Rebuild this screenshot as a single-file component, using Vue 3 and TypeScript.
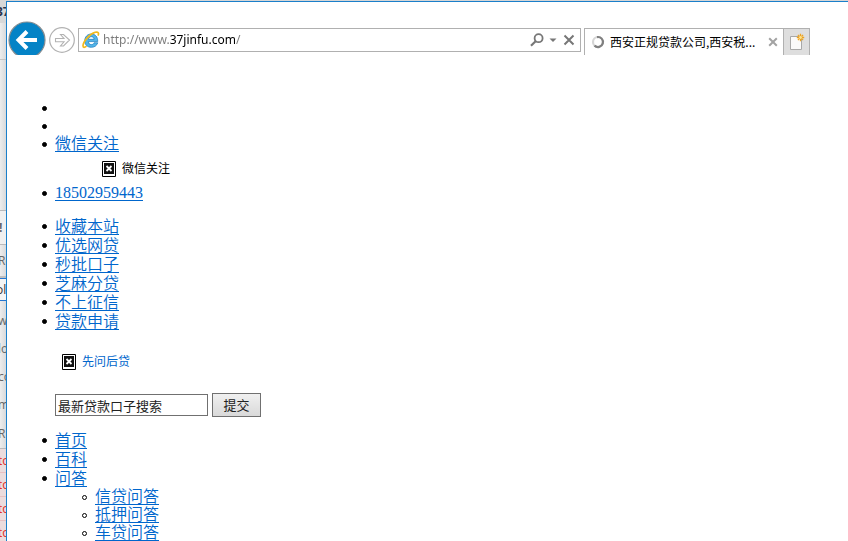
<script setup lang="ts">
import { ref } from 'vue'

interface StripRow {
  kind: string
  text?: string
}

const stripRows: StripRow[] = [
  { kind: 'title', text: '37' },
  { kind: 'toolbar' },
  { kind: 'blank' },
  { kind: 'notice', text: '!' },
  { kind: 'heading', text: 'Re' },
  { kind: 'field', text: 'ol' },
  { kind: 'entry', text: 'w' },
  { kind: 'entry', text: 'lo' },
  { kind: 'entry', text: 'co' },
  { kind: 'entry', text: 'm' },
  { kind: 'entry last', text: 'R' },
  { kind: 'error', text: 'to' },
  { kind: 'error', text: 'to' },
  { kind: 'error', text: 'to' },
  { kind: 'error', text: 'to' },
]

const url = ref('http://www.37jinfu.com/')
const keyword = ref('最新贷款口子搜索')
const quickLinks: string[] = ['收藏本站', '优选网贷', '秒批口子', '芝麻分贷', '不上征信', '贷款申请']
const answers: string[] = ['信贷问答', '抵押问答', '车贷问答']
</script>

<template>
  <div class="desktop">
    <aside class="strip">
      <div v-for="(row, i) in stripRows" :key="i" class="strip-row" :class="row.kind">
        <span v-if="row.text">{{ row.text }}</span>
      </div>
    </aside>

    <div class="window">
      <header class="chrome">
        <button class="nav back" type="button" aria-label="后退">
          <svg width="38" height="34" viewBox="0 0 38 34">
            <circle cx="19" cy="19" r="18" fill="#0483c6" stroke="#858d92" stroke-width="1.2" />
            <path d="M29 19H11M19 10.5L10.5 19L19 27.5" fill="none" stroke="#fff" stroke-width="4" />
          </svg>
        </button>
        <button class="nav forward" type="button" aria-label="前进">
          <svg width="26" height="26" viewBox="0 0 26 26">
            <circle cx="13" cy="13" r="12.3" fill="#fff" stroke="#b2b2b2" stroke-width="1.2" />
            <path d="M6.5 11.5H15L11.5 7.5H14.5L20.5 13L14.5 19H11.5L15 14.8H6.5Z" fill="#fff" stroke="#b2b2b2" stroke-width="1.1" />
          </svg>
        </button>
        <div class="address">
          <svg width="18" height="18" viewBox="0 0 18 18">
            <path d="M15.8 11.8C14.7 14.8 12.4 16.3 9.3 16.3C5.3 16.3 2.7 13.7 2.7 9.8C2.7 5.9 5.5 3 9.3 3C13.3 3 15.9 5.8 15.7 10.6H6.4C6.6 12.6 7.7 13.6 9.5 13.6C10.7 13.6 11.6 13 12 11.8ZM6.5 8.3H12.1C11.9 6.6 10.9 5.7 9.3 5.7C7.8 5.7 6.8 6.7 6.5 8.3Z" fill="#52b5e8" stroke="#1779bd" stroke-width=".7" />
            <path d="M4.5 15.2C2.5 16.8 1 16.8 1 14.8C1 10.8 7.8 2.8 13.2 1.3C16.3 .4 17.2 2 16 4.7" fill="none" stroke="#f3b91b" stroke-width="1.7" />
          </svg>
          <input v-model="url" class="url" type="text" aria-label="地址" spellcheck="false" />
          <button class="tool" type="button" aria-label="搜索">
            <svg width="14" height="14" viewBox="0 0 14 14" fill="none" stroke="#777">
              <circle cx="8.6" cy="5.2" r="4" stroke-width="1.8" />
              <path d="M5.6 8.2L1 12.8" stroke-width="2.2" />
            </svg>
          </button>
          <button class="tool" type="button" aria-label="展开">
            <svg width="8" height="14" viewBox="0 0 8 14"><path d="M.5 5.5H7.5L4 9Z" fill="#777" /></svg>
          </button>
          <button class="tool stop" type="button" aria-label="停止">
            <svg width="12" height="14" viewBox="0 0 12 14"><path d="M1.5 2.5L10.5 11.5M10.5 2.5L1.5 11.5" stroke="#777" stroke-width="2" /></svg>
          </button>
        </div>
        <div class="tab">
          <svg width="14" height="14" viewBox="0 0 14 14" fill="none" stroke-width="2.2">
            <circle cx="7" cy="7" r="5" stroke="#d6d6d6" />
            <path d="M6 2.1A5 5 0 1 1 3.5 10.6" stroke="#808080" />
          </svg>
          <span class="tab-title">西安正规贷款公司,西安税...</span>
          <button class="tool" type="button" aria-label="关闭标签页">
            <svg width="10" height="10" viewBox="0 0 10 10"><path d="M1.2 1.2L8.8 8.8M8.8 1.2L1.2 8.8" stroke="#a3a3a3" stroke-width="2" /></svg>
          </button>
        </div>
        <button class="new-tab" type="button" aria-label="新建标签页">
          <svg width="16" height="18" viewBox="0 0 16 18">
            <path d="M1.5 3.5H12.5V16.5H1.5Z" fill="#fafafa" stroke="#a8a8a8" />
            <path d="M11.5 .8V8.2M7.8 4.5H15.2M8.9 1.9L14.1 7.1M14.1 1.9L8.9 7.1" stroke="#eea31f" stroke-width="1.3" />
            <circle cx="11.5" cy="4.5" r="1.4" fill="#ffe389" />
          </svg>
        </button>
      </header>

      <main class="page">
        <ul class="contact">
          <li></li>
          <li></li>
          <li>
            <a href="#">微信关注</a>
            <div class="missing wechat">
              <svg width="14" height="16" viewBox="0 0 14 16">
                <path d="M.5 .5H13.5V15.5H.5Z" fill="#fff" stroke="#000" />
                <path d="M2 2H12V13H2Z" fill="#111" />
                <path d="M4.5 5L9.5 10M9.5 5L4.5 10" stroke="#fff" stroke-width="1.8" />
              </svg>
              <span>微信关注</span>
            </div>
          </li>
          <li><a href="tel:18502959443">18502959443</a></li>
        </ul>

        <ul class="quick">
          <li v-for="name in quickLinks" :key="name"><a href="#">{{ name }}</a></li>
        </ul>

        <a class="missing logo" href="#">
          <svg width="14" height="16" viewBox="0 0 14 16">
            <path d="M.5 .5H13.5V15.5H.5Z" fill="#fff" stroke="#000" />
            <path d="M2 2H12V13H2Z" fill="#111" />
            <path d="M4.5 5L9.5 10M9.5 5L4.5 10" stroke="#fff" stroke-width="1.8" />
          </svg>
          <span>先问后贷</span>
        </a>

        <form class="search" @submit.prevent>
          <input v-model="keyword" type="text" aria-label="搜索" />
          <button type="submit">提交</button>
        </form>

        <ul class="menu">
          <li><a href="#">首页</a></li>
          <li><a href="#">百科</a></li>
          <li>
            <a href="#">问答</a>
            <ul>
              <li v-for="name in answers" :key="name"><a href="#">{{ name }}</a></li>
            </ul>
          </li>
        </ul>
      </main>
    </div>
  </div>
</template>

<style>
body {
  margin: 0;
  overflow: hidden;
}
</style>

<style scoped>
.desktop {
  display: flex;
  height: 100vh;
  overflow: hidden;
  background: #d6d6d6;
}

.strip {
  flex: 0 0 6px;
  overflow: hidden;
  color: #666;
  font: 12px/16px "Open Sans", sans-serif;
  background: linear-gradient(90deg, #ededed, #d9dadb);
}
.strip-row {
  box-sizing: border-box;
  display: flex;
  align-items: center;
  overflow: hidden;
  white-space: nowrap;
}
.strip-row span { margin-left: -2px; }
.strip .title {
  height: 23px;
  color: #29344d;
  font-weight: bold;
  background: #d8d8d8;
}
.strip .title span { margin-left: -4px; }
.strip .toolbar { height: 37px; border-bottom: 1px solid #c5c5c5; }
.strip .blank { height: 151px; border-bottom: 1px solid #b9b9bb; }
.strip .notice { height: 34px; border-bottom: 1px solid #b9b9bb; background: #f0f0f0; }
.strip .notice span { margin-left: -1px; font-weight: bold; }
.strip .heading { height: 33px; border-bottom: 2px solid #c0c0c0; }
.strip .field {
  height: 23px;
  margin-bottom: 6px;
  color: #333;
  background: #f5f5f5;
  border: solid #2575d0;
  border-width: 1px 0;
}
.strip .field span { margin-left: -4px; }
.strip .entry { height: 28px; }
.strip .last { height: 30px; border-bottom: 1px solid #b9b9bb; }
.strip .error {
  height: 24px;
  color: #e02a1c;
  background: #ecdcdd;
  border-bottom: 1px solid #e8c0c2;
}

.window {
  flex: 1;
  min-width: 0;
  margin-top: 1px;
  overflow: hidden;
  background: #fff;
  border: solid #1b7fca;
  border-width: 1px 0 0 1px;
}

button {
  padding: 0;
  border: 0;
  background: none;
}
svg { display: block; flex: none; }

.chrome {
  display: flex;
  align-items: flex-end;
  height: 53px;
  padding: 0 38px 0 1px;
}
.forward { margin: 0 3px 2px; }
.address {
  box-sizing: border-box;
  flex: 1;
  display: flex;
  align-items: center;
  height: 24px;
  min-width: 0;
  margin: 0 3px 3px 0;
  padding: 0 5px 0 3px;
  border: 1px solid #b0b0b0;
}
.url {
  flex: 1;
  min-width: 0;
  height: 20px;
  margin-left: 3px;
  padding: 0;
  border: 0;
  outline: 0;
  font: 12px/20px "Noto Sans", sans-serif;
  color: transparent;
  caret-color: #000;
  background: linear-gradient(90deg, #7a7a7a 66px, #000 66px, #000 133px, #7a7a7a 133px);
  background-clip: text;
}
.address .tool { margin-left: 5px; }
.address .stop { margin-left: 6px; }

.tab {
  box-sizing: border-box;
  flex: 0 0 199px;
  display: flex;
  align-items: center;
  height: 27px;
  padding: 0 5px 0 6px;
  border: 1px solid #b0b0b0;
  border-width: 1px 0 0 1px;
}
.tab-title {
  flex: 1;
  margin-left: 5px;
  font: 12px/20px "Noto Sans CJK SC", sans-serif;
  white-space: nowrap;
}
.new-tab {
  box-sizing: border-box;
  display: grid;
  place-items: center;
  width: 27px;
  height: 27px;
  background: #dedede;
  border: 1px solid #b0b0b0;
  border-bottom: 0;
}

.page {
  padding: 44px 8px 0;
  font: 16px/19px "Liberation Serif", "Noto Sans CJK SC", serif;
}
.page a {
  color: #0066cc;
  font-weight: 350;
  text-underline-offset: 2px;
}
ul {
  margin: 0 0 15px;
  padding-left: 40px;
  list-style: none;
}
li { position: relative; }
li::before {
  content: "";
  position: absolute;
  top: 7px;
  left: -13px;
  box-sizing: border-box;
  width: 5px;
  height: 5px;
  border: 1px solid #000;
  border-radius: 50%;
  background: #000;
}
.contact { line-height: 18px; }
.contact li { min-height: 18px; }

.missing {
  display: flex;
  align-items: flex-start;
  gap: 6px;
  font: 12px/14px "Noto Sans CJK SC", sans-serif;
}
.wechat {
  margin: 0 0 7px 47px;
  padding-top: 8px;
}
.page .logo {
  width: max-content;
  margin: 23px 0 23px 47px;
  font-weight: 400;
  text-decoration: none;
}

.search {
  display: flex;
  align-items: center;
  gap: 4px;
  margin: 0 0 14px 40px;
}
.search input,
.search button {
  box-sizing: border-box;
  color: #222;
  font: 13px/18px "Noto Sans CJK SC", sans-serif;
  border: 1px solid #707070;
}
.search input {
  width: 153px;
  height: 22px;
  padding: 0 2px;
}
.search button {
  width: 49px;
  height: 24px;
  background: linear-gradient(#f0f0f0, #d9d9d9);
}
.menu ul {
  margin: 0;
  line-height: 18px;
}
.menu ul li::before { background: #fff; }
</style>
